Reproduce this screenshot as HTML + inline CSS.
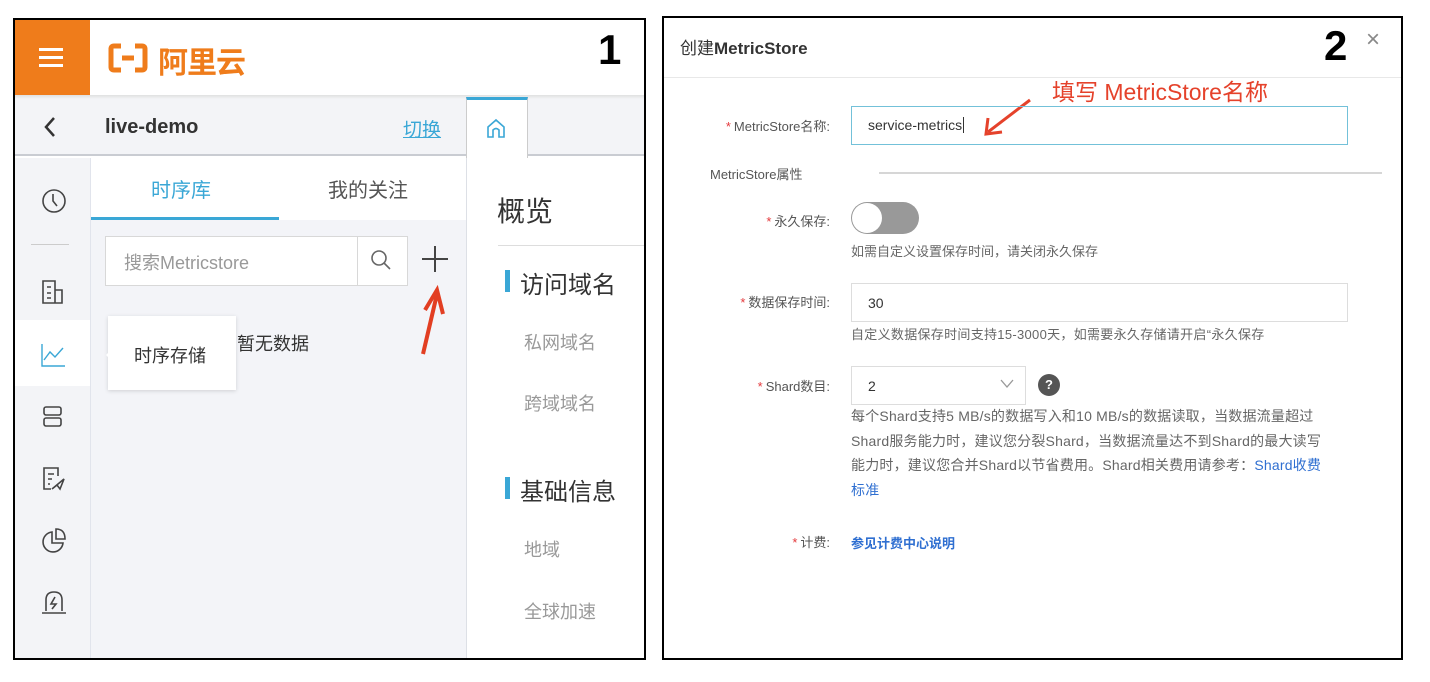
<!DOCTYPE html>
<html><head><meta charset="utf-8"><style>
*{box-sizing:border-box;margin:0;padding:0}
body{width:1430px;height:682px;background:#fff;position:relative;font-family:"Liberation Sans","Noto Sans CJK SC",sans-serif;overflow:hidden}
.a{position:absolute}
.p1{left:13px;top:18px;width:633px;height:642px;border:2px solid #000;overflow:hidden;background:#fff}
.p2{left:662px;top:16px;width:741px;height:644px;border:2px solid #000;overflow:hidden;background:#fff}
.lbl{font-size:13px;color:#555;text-align:right;width:200px}
.lbl b{color:#e4393c;font-weight:normal;margin-right:3px}
.help{font-size:13px;color:#666;line-height:24.5px}
.ic{stroke:#444;fill:none;stroke-width:1.6}
</style></head><body>
<div class="a p1">
 <div class="a" style="left:0;top:0;width:75px;height:77px;background:#ef7c1b"></div>
 <div class="a" style="left:24px;top:28px;width:24px;height:3px;background:#fff;box-shadow:0 8px 0 #fff,0 16px 0 #fff"></div>
 <svg class="a" style="left:93px;top:22px" width="40" height="32" viewBox="0 0 40 32"><path d="M13 4H6Q3 4 3 7V25Q3 28 6 28H13M27 4H34Q37 4 37 7V25Q37 28 34 28H27M14 16H26" stroke="#ef7c1b" stroke-width="5" fill="none"/></svg>
 <div class="a" style="left:143px;top:18px;font-size:30px;font-weight:bold;color:#ef7c1b;letter-spacing:-1px">阿里云</div>
 <div class="a" style="left:583px;top:6px;font-size:42px;font-weight:bold;color:#000">1</div>
 <div class="a" style="left:0;top:77px;width:633px;height:59px;background:#f3f4f7;border-bottom:2px solid #c9ccd2"></div>
 <div class="a" style="left:0;top:75px;width:633px;height:4px;background:linear-gradient(#e0e0e0,#f3f4f7)"></div>
 <svg class="a" style="left:27px;top:95px" width="16" height="24"><path d="M12 3L4 12L12 21" stroke="#333" stroke-width="2.5" fill="none"/></svg>
 <div class="a" style="left:90px;top:96px;font-size:20px;font-weight:bold;color:#333">live-demo</div>
 <div class="a" style="left:388px;top:95px;font-size:19px;color:#3aa7d6;text-decoration:underline">切换</div>
 <div class="a" style="left:451px;top:77px;width:62px;height:61px;background:#fff;border-top:3px solid #3aa7d6;border-left:1px solid #ccc;border-right:1px solid #ccc"></div>
 <svg class="a" style="left:469px;top:97px" width="24" height="24"><path d="M4 20V10L12 3L20 10V20H15V13Q12 10 9 13V20Z" stroke="#3aa7d6" stroke-width="1.6" fill="none"/></svg>
 <div class="a" style="left:0;top:138px;width:75px;height:504px;background:#f3f4f7"></div>
 <div class="a" style="left:75px;top:138px;width:377px;height:504px;background:#f3f4f8;border-left:1px solid #e1e4ec;border-right:1px solid #dde0e6"></div>
 <div class="a" style="left:76px;top:138px;width:375px;height:62px;background:#fff"></div>
 <div class="a" style="left:136px;top:154px;font-size:20px;color:#3aa7d6">时序库</div>
 <div class="a" style="left:313px;top:154px;font-size:20px;color:#555">我的关注</div>
 <div class="a" style="left:76px;top:197px;width:188px;height:3px;background:#3aa7d6"></div>
 <div class="a" style="left:90px;top:216px;width:303px;height:50px;background:#fff;border:1px solid #d8d8d8"></div>
 <div class="a" style="left:342px;top:216px;width:1px;height:50px;background:#d8d8d8"></div>
 <div class="a" style="left:109px;top:229px;font-size:18px;color:#999">搜索Metricstore</div>
 <svg class="a" style="left:354px;top:228px" width="24" height="24"><circle cx="10" cy="10" r="7" stroke="#666" stroke-width="1.6" fill="none"/><path d="M15 15L21 21" stroke="#666" stroke-width="1.6"/></svg>
 <div class="a" style="left:407px;top:238px;width:26px;height:2px;background:#444"></div>
 <div class="a" style="left:419px;top:226px;width:2px;height:26px;background:#444"></div>
 <svg class="a" style="left:398px;top:262px" width="40" height="75"><path d="M10 72L24 12" stroke="#e23e22" stroke-width="4" fill="none"/><path d="M12 28L24 8L30 32" stroke="#e23e22" stroke-width="4" fill="none"/></svg>
 <div class="a" style="left:0;top:300px;width:75px;height:66px;background:#fff"></div>
 <div class="a" style="left:93px;top:296px;width:128px;height:74px;background:#fff;box-shadow:0 1px 4px rgba(0,0,0,.15)"></div>
 <div class="a" style="left:83px;top:327px;width:0;height:0;border:8px solid transparent;border-right-color:#fff"></div>
 <div class="a" style="left:119px;top:322px;font-size:18px;color:#333">时序存储</div>
 <div class="a" style="left:222px;top:310px;font-size:18px;color:#333">暂无数据</div>
 <svg class="a" style="left:24px;top:166px" width="30" height="30"><circle cx="15" cy="15" r="11" class="ic"/><path d="M14 8V15L18 20" class="ic"/></svg>
 <div class="a" style="left:16px;top:224px;width:38px;height:1px;background:#ccc"></div>
 <svg class="a" style="left:24px;top:258px" width="30" height="30"><path d="M4 3H16V25H4Z M16 12H23V25H16 M8 9H12M8 15H12M8 20H12" class="ic"/></svg>
 <svg class="a" style="left:24px;top:320px" width="30" height="30"><path d="M3 4V26H26" stroke="#3aa7d6" stroke-width="1.4" fill="none"/><path d="M5 20L11 12L16 17L24 8" stroke="#3aa7d6" stroke-width="1.4" fill="none"/></svg>
 <svg class="a" style="left:24px;top:382px" width="30" height="30"><rect x="5" y="5" width="17" height="8" rx="2" class="ic"/><rect x="5" y="16" width="17" height="8" rx="2" class="ic"/></svg>
 <svg class="a" style="left:24px;top:444px" width="30" height="30"><path d="M19 12V4H5V25H12 M9 10H15M9 15H13M9 20H11 M13 25L25 15L21 25L18 21Z" class="ic"/></svg>
 <svg class="a" style="left:24px;top:506px" width="30" height="30"><path d="M13 6A10 10 0 1 0 24 17H13Z M17 3V13H26Q26 3 17 3Z" class="ic"/></svg>
 <svg class="a" style="left:24px;top:568px" width="30" height="30"><path d="M7 23V12Q7 4 15 4Q23 4 23 12V23 M3 25H27 M16 9L12 16H17L13 21" class="ic"/></svg>
 <div class="a" style="left:482px;top:170px;font-size:28px;color:#333">概览</div>
 <div class="a" style="left:483px;top:225px;width:150px;height:1px;background:#ddd"></div>
 <div class="a" style="left:490px;top:250px;width:5px;height:22px;background:#3aa7d6"></div>
 <div class="a" style="left:505px;top:245px;font-size:24px;color:#333">访问域名</div>
 <div class="a" style="left:509px;top:309px;font-size:18px;color:#999">私网域名</div>
 <div class="a" style="left:509px;top:370px;font-size:18px;color:#999">跨域域名</div>
 <div class="a" style="left:490px;top:457px;width:5px;height:22px;background:#3aa7d6"></div>
 <div class="a" style="left:505px;top:452px;font-size:24px;color:#333">基础信息</div>
 <div class="a" style="left:509px;top:516px;font-size:18px;color:#999">地域</div>
 <div class="a" style="left:509px;top:578px;font-size:18px;color:#999">全球加速</div>
</div>
<div class="a p2">
 <div class="a" style="left:16px;top:16px;font-size:17px;color:#333"><span>创建</span><b>MetricStore</b></div>
 <div class="a" style="left:660px;top:4px;font-size:42px;font-weight:bold;color:#000">2</div>
 <div class="a" style="left:702px;top:8px;font-size:24px;color:#888;font-weight:200">×</div>
 <div class="a" style="left:0;top:59px;width:741px;height:1px;background:#e8e8e8"></div>
 <div class="a" style="left:388px;top:60px;font-size:23px;color:#e5422b;line-height:28px">填写 MetricStore名称</div>
 <svg class="a" style="left:316px;top:78px" width="54" height="42"><path d="M50 4L8 36" stroke="#e5422b" stroke-width="3"/><path d="M8 22L6 38L22 36" stroke="#e5422b" stroke-width="3" fill="none"/></svg>
 <div class="a lbl" style="left:-34px;top:98px"><b>*</b>MetricStore名称:</div>
 <div class="a" style="left:187px;top:88px;width:497px;height:39px;border:1px solid #73c1d9"></div>
 <div class="a" style="left:204px;top:99px;font-size:14px;color:#333">service-metrics<span style="border-left:1px solid #333;margin-left:1px"></span></div>
 <div class="a" style="left:46px;top:146px;font-size:13px;color:#555">MetricStore属性</div>
 <div class="a" style="left:215px;top:154px;width:503px;height:2px;background:#d6d6d6"></div>
 <div class="a lbl" style="left:-34px;top:193px"><b>*</b>永久保存:</div>
 <div class="a" style="left:187px;top:184px;width:68px;height:32px;border-radius:16px;background:#999"></div>
 <div class="a" style="left:188px;top:185px;width:30px;height:30px;border-radius:15px;background:#fff"></div>
 <div class="a help" style="left:187px;top:222px">如需自定义设置保存时间，请关闭永久保存</div>
 <div class="a lbl" style="left:-34px;top:274px"><b>*</b>数据保存时间:</div>
 <div class="a" style="left:187px;top:265px;width:497px;height:39px;border:1px solid #ddd"></div>
 <div class="a" style="left:204px;top:277px;font-size:14px;color:#333">30</div>
 <div class="a help" style="left:187px;top:305px;letter-spacing:0.3px">自定义数据保存时间支持15-3000天，如需要永久存储请开启“永久保存</div>
 <div class="a lbl" style="left:-34px;top:358px"><b>*</b>Shard数目:</div>
 <div class="a" style="left:187px;top:348px;width:175px;height:39px;border:1px solid #ddd"></div>
 <div class="a" style="left:204px;top:360px;font-size:14px;color:#333">2</div>
 <svg class="a" style="left:335px;top:360px" width="16" height="12"><path d="M2 2L8 9L14 2" stroke="#999" stroke-width="1.3" fill="none"/></svg>
 <div class="a" style="left:374px;top:356px;width:22px;height:22px;border-radius:11px;background:#555;color:#fff;font-size:13px;font-weight:bold;text-align:center;line-height:22px">?</div>
 <div class="a help" style="left:187px;top:386px;white-space:nowrap;font-size:14px;letter-spacing:0.2px">每个Shard支持5 MB/s的数据写入和10 MB/s的数据读取，当数据流量超过<br>Shard服务能力时，建议您分裂Shard，当数据流量达不到Shard的最大读写<br>能力时，建议您合并Shard以节省费用。Shard相关费用请参考：<span style="color:#2f6fd1">Shard收费</span><br><span style="color:#2f6fd1">标准</span></div>
 <div class="a lbl" style="left:-34px;top:514px"><b>*</b>计费:</div>
 <div class="a" style="left:187px;top:515px;font-size:13px;color:#2f6fd1;font-weight:bold">参见计费中心说明</div>
</div>
</body></html>
